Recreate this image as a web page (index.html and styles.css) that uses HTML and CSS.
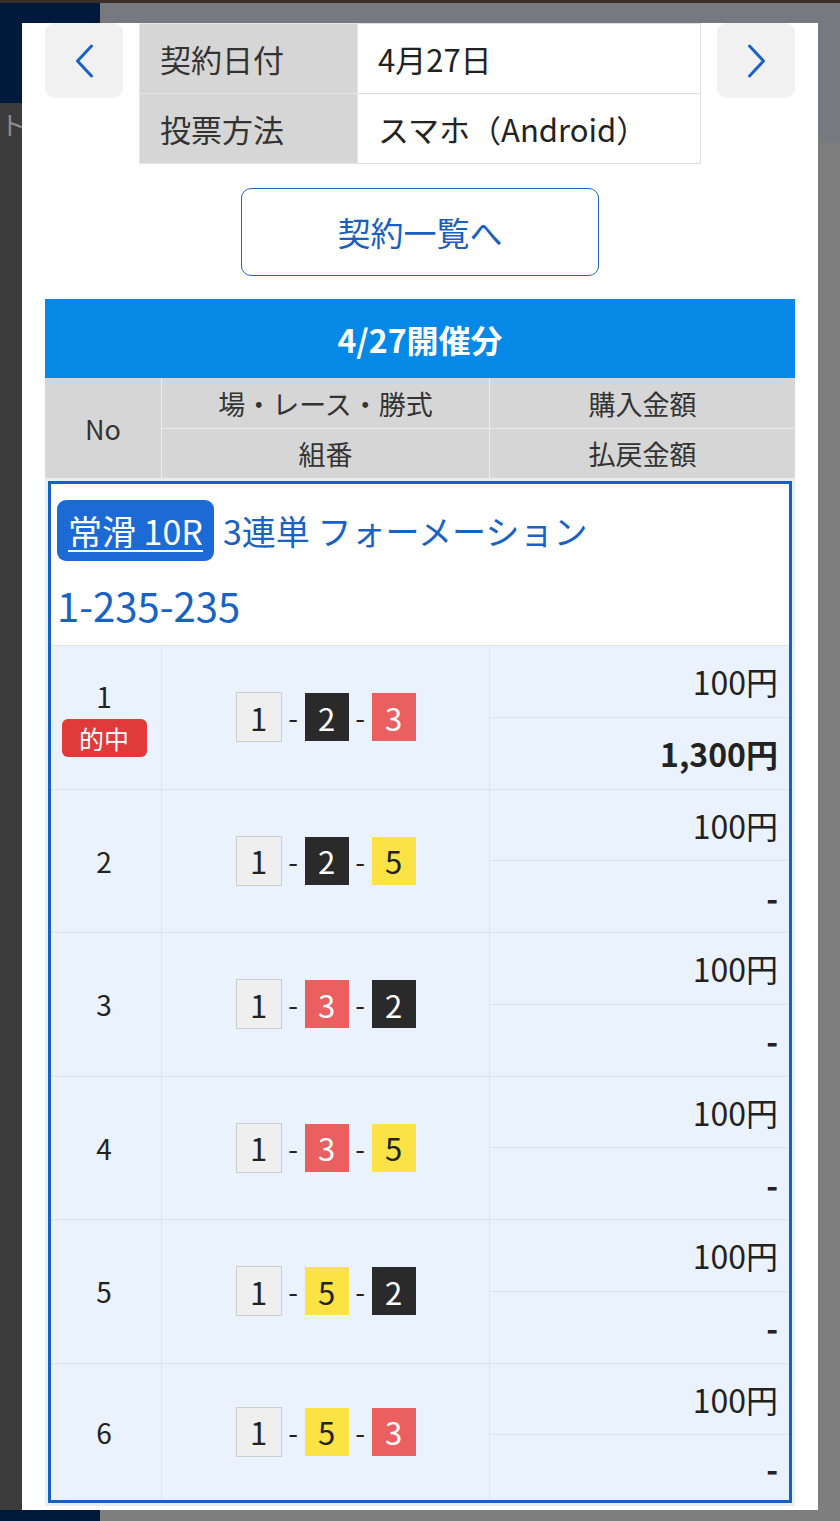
FILE: index.html
```html
<!DOCTYPE html>
<html lang="ja">
<head>
<meta charset="utf-8">
<title>契約内容</title>
<link rel="stylesheet" href="styles.css">
</head>
<body>
<div class="page">
  <div class="page-top"></div>
  <div class="page-hdr"><div class="page-brand"></div><div class="page-hdrbar"></div></div>
  <div class="page-main">
    <div class="page-side"><span class="page-sidetext">ト2</span></div>
    <div class="page-content"></div>
  </div>
  <div class="page-ftr"><div class="page-brand"></div><div class="page-ftrbar"></div></div>
</div>

<div class="modal">
  <div class="topnav">
    <button class="nav" aria-label="前へ">
      <svg width="19" height="34" viewBox="0 0 19 34"><polyline points="16.5,2 2.5,17 16.5,32" fill="none" stroke="#1a63c6" stroke-width="3" stroke-linecap="round" stroke-linejoin="round"/></svg>
    </button>
    <table class="info">
      <tr><th>契約日付</th><td>4月27日</td></tr>
      <tr><th>投票方法</th><td>スマホ（Android）</td></tr>
    </table>
    <button class="nav" aria-label="次へ">
      <svg width="19" height="34" viewBox="0 0 19 34"><polyline points="2.5,2 16.5,17 2.5,32" fill="none" stroke="#1a63c6" stroke-width="3" stroke-linecap="round" stroke-linejoin="round"/></svg>
    </button>
  </div>

  <div class="actions"><a class="listbtn" href="#">契約一覧へ</a></div>

  <div class="day">4/27開催分</div>

  <div class="thead">
    <div class="th th-no">No</div>
    <div class="th">場・レース・勝式</div>
    <div class="th">購入金額</div>
    <div class="th">組番</div>
    <div class="th">払戻金額</div>
  </div>

  <div class="tbody">
    <div class="box">
      <div class="race">
        <div class="race-line"><a class="race-badge" href="#">常滑 10R</a><span class="race-type">3連単 フォーメーション</span></div>
        <div class="race-combo">1-235-235</div>
      </div>

      <div class="bet">
        <div class="bet-no"><span class="num">1</span><span class="hit">的中</span></div>
        <div class="bet-combo"><span class="boat b1">1</span><span class="dash">-</span><span class="boat b2">2</span><span class="dash">-</span><span class="boat b3">3</span></div>
        <div class="bet-amt">100円</div>
        <div class="bet-amt bet-pay">1,300円</div>
      </div>

      <div class="bet">
        <div class="bet-no"><span class="num">2</span></div>
        <div class="bet-combo"><span class="boat b1">1</span><span class="dash">-</span><span class="boat b2">2</span><span class="dash">-</span><span class="boat b5">5</span></div>
        <div class="bet-amt">100円</div>
        <div class="bet-amt bet-pay">-</div>
      </div>

      <div class="bet">
        <div class="bet-no"><span class="num">3</span></div>
        <div class="bet-combo"><span class="boat b1">1</span><span class="dash">-</span><span class="boat b3">3</span><span class="dash">-</span><span class="boat b2">2</span></div>
        <div class="bet-amt">100円</div>
        <div class="bet-amt bet-pay">-</div>
      </div>

      <div class="bet">
        <div class="bet-no"><span class="num">4</span></div>
        <div class="bet-combo"><span class="boat b1">1</span><span class="dash">-</span><span class="boat b3">3</span><span class="dash">-</span><span class="boat b5">5</span></div>
        <div class="bet-amt">100円</div>
        <div class="bet-amt bet-pay">-</div>
      </div>

      <div class="bet">
        <div class="bet-no"><span class="num">5</span></div>
        <div class="bet-combo"><span class="boat b1">1</span><span class="dash">-</span><span class="boat b5">5</span><span class="dash">-</span><span class="boat b2">2</span></div>
        <div class="bet-amt">100円</div>
        <div class="bet-amt bet-pay">-</div>
      </div>

      <div class="bet">
        <div class="bet-no"><span class="num">6</span></div>
        <div class="bet-combo"><span class="boat b1">1</span><span class="dash">-</span><span class="boat b5">5</span><span class="dash">-</span><span class="boat b3">3</span></div>
        <div class="bet-amt">100円</div>
        <div class="bet-amt bet-pay">-</div>
      </div>
    </div>
  </div>
</div>
</body>
</html>
```

FILE: styles.css
```css
* { box-sizing: border-box; }
html, body { margin: 0; padding: 0; }
body {
  position: relative;
  width: 840px;
  height: 1521px;
  overflow: hidden;
  font-family: "Noto Sans CJK JP", "Noto Sans", sans-serif;
  color: #222;
  background: #7e7e7e;
}

/* dimmed page behind the modal */
.page { display: flex; flex-direction: column; height: 1521px; }
.page-top { height: 3px; background: #3b3029; }
.page-hdr { height: 100px; display: flex; }
.page-brand { width: 100px; background: #011a3c; }
.page-hdrbar { flex: 1; background: #77797f; }
.page-main { flex: 1; display: flex; }
.page-side { width: 100px; background: #3b3b3b; padding-top: 4px; }
.page-sidetext { display: block; margin-left: 0; font-size: 26px; line-height: 34px; color: #8d8d8d; }
.page-content { flex: 1; background: #7e7e7e; border-top: 40px solid #77797f; }
.page-ftr { height: 11px; display: flex; }
.page-ftrbar { flex: 1; background: #7e7e7e; }

/* modal */
.modal {
  position: absolute;
  left: 22px;
  top: 23px;
  width: 796px;
  height: 1487px;
  background: #fff;
  padding: 0 23px;
  overflow: hidden;
}

.topnav { display: flex; align-items: flex-start; gap: 16px; height: 140px; }
.nav {
  width: 78px;
  height: 75px;
  flex: none;
  border: 0;
  padding: 0;
  border-radius: 10px;
  background: #f1f1f1;
  display: flex;
  align-items: center;
  justify-content: center;
}
.info { width: 562px; border-collapse: collapse; flex: none; }
.info th, .info td {
  height: 70px;
  padding: 0 0 0 20px;
  font-size: 31px;
  font-weight: 400;
  text-align: left;
  border: 1px solid #dedede;
}
.info th { width: 218px; background: #d6d6d6; color: #333; border-color: #e6e6e6; }
.info td { color: #222; }

.actions { display: flex; justify-content: center; margin-top: 25px; }
.listbtn {
  width: 358px;
  height: 88px;
  border: 1.5px solid #2464b4;
  border-radius: 10px;
  display: flex;
  align-items: center;
  justify-content: center;
  font-size: 33px;
  color: #1a5fbf;
  text-decoration: none;
}

.day {
  margin-top: 23px;
  height: 79px;
  background: #0689e6;
  color: #fff;
  font-weight: 700;
  font-size: 32px;
  display: flex;
  align-items: center;
  justify-content: center;
}

.thead {
  display: grid;
  grid-template-columns: 116px 327px 1fr;
  grid-template-rows: 50px 49px;
  gap: 1px;
  background: #ececec;
  font-size: 27px;
  color: #333;
}
.th { background: #d6d6d6; display: flex; align-items: center; justify-content: center; }
.th-no { grid-row: span 2; }

.tbody { background: #e8edf2; padding: 3px; }
.box {
  border: 3px solid #1560c6;
  display: flex;
  flex-direction: column;
  gap: 1px;
  background: #dce3eb;
}

.race { background: #fff; height: 161px; padding: 16px 6px 0; }
.race-line { display: flex; align-items: center; gap: 9px; height: 61px; }
.race-badge {
  height: 61px;
  padding: 0 11px;
  background: #1b6ad5;
  border-radius: 9px;
  color: #fff;
  font-size: 34px;
  text-decoration: underline;
  text-decoration-thickness: 2px;
  text-underline-offset: 5px;
  display: flex;
  align-items: center;
}
.race-type { font-size: 34px; color: #1762c4; }
.race-combo { margin-top: 14px; font-size: 40px; line-height: 60px; color: #1762c4; }

.bet {
  display: grid;
  grid-template-columns: 110px 327px 1fr;
  grid-template-rows: 70.75px 70.75px;
  gap: 1px;
}
.bet:last-child { grid-template-rows: 70.75px 64.75px; }
.bet > div { background: #eaf2fd; }

.bet-no {
  grid-row: span 2;
  display: flex;
  flex-direction: column;
  align-items: center;
  justify-content: center;
  padding-right: 4px;
  font-size: 28px;
}
.num { line-height: 36px; }
.hit {
  margin-top: 5px;
  width: 85px;
  height: 38px;
  border-radius: 6px;
  background: #e03a3a;
  color: #fff;
  font-size: 25px;
  display: flex;
  align-items: center;
  justify-content: center;
}

.bet-combo { grid-row: span 2; display: flex; align-items: center; justify-content: center; }
.boat {
  width: 44px;
  height: 48px;
  display: flex;
  align-items: center;
  justify-content: center;
  font-size: 31px;
}
.dash { width: 23px; text-align: center; font-size: 28px; }
.b1 { background: #efefef; border: 1px solid #cdcdcd; width: 46px; height: 50px; color: #222; }
.b2 { background: #2a2a2a; color: #fff; }
.b3 { background: #ea5f5f; color: #fff; }
.b5 { background: #fbe245; color: #222; }

.bet-amt {
  display: flex;
  align-items: center;
  justify-content: flex-end;
  padding-right: 11px;
  font-size: 32px;
}
.bet-pay { font-weight: 700; }
```
